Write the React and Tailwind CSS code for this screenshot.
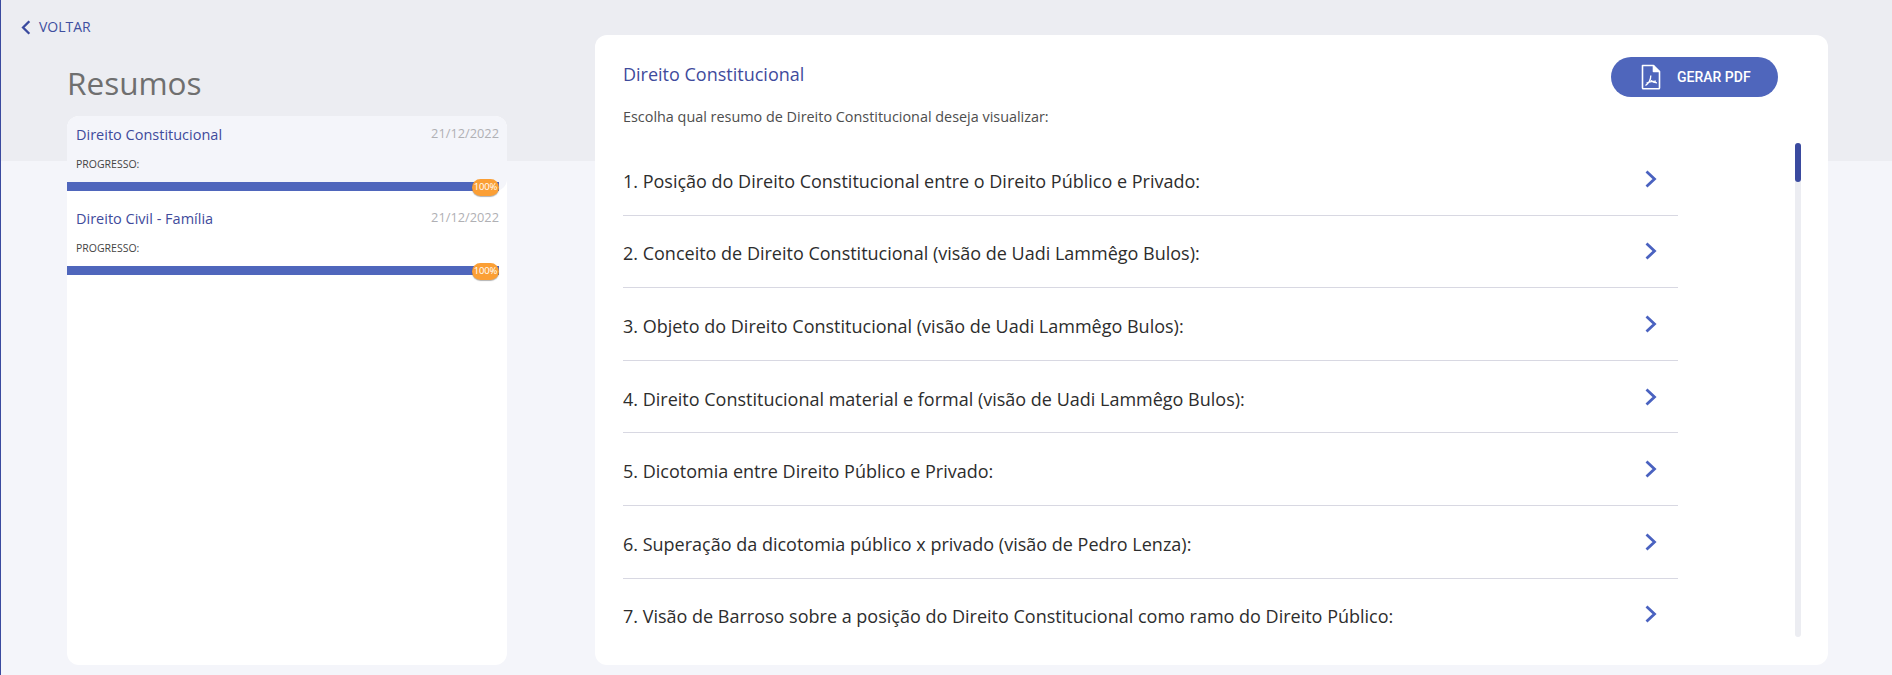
import React from 'react';

const resumos = [
  { id: 1, title: 'Direito Constitucional', date: '21/12/2022', active: true },
  { id: 2, title: 'Direito Civil - Família', date: '21/12/2022', active: false }
];

const topicos = [
  '1. Posição do Direito Constitucional entre o Direito Público e Privado:',
  '2. Conceito de Direito Constitucional (visão de Uadi Lammêgo Bulos):',
  '3. Objeto do Direito Constitucional (visão de Uadi Lammêgo Bulos):',
  '4. Direito Constitucional material e formal (visão de Uadi Lammêgo Bulos):',
  '5. Dicotomia entre Direito Público e Privado:',
  '6. Superação da dicotomia público x privado (visão de Pedro Lenza):',
  '7. Visão de Barroso sobre a posição do Direito Constitucional como ramo do Direito Público:'
];

const Chevron = ({ className, flip }) => (
  <svg className={className} width="12" height="18" viewBox="0 0 12 18" fill="none" stroke="currentColor" strokeWidth="2.8">
    <path d={flip ? 'M10 1.5 L2.5 9 L10 16.5' : 'M1.5 1.5 L9.5 9 L1.5 16.5'} />
  </svg>
);

const PdfIcon = () => (
  <svg width="20" height="26" viewBox="0 0 20 26" fill="none" stroke="white" strokeWidth="1.6" strokeLinejoin="round">
    <path d="M1.5 1.5 H12.5 L18.5 7.5 V24 Q18.5 24.8 17.7 24.8 H2.3 Q1.5 24.8 1.5 24 Z" />
    <path d="M12.5 1.5 V7.5 H18.5" fill="white" />
    <path d="M9.8 11.5 C9.8 15 8 19 4.5 21.5 M9.8 16.5 C11.5 18.2 13.5 18.8 16 18.8 M5.5 19 C8.5 17.8 11.5 17.2 15 17.2" strokeWidth="1.3" />
  </svg>
);

const App = () => {
  return (
    <div className="h-[675px] overflow-hidden border-l border-l-[#3a4a9f] bg-[linear-gradient(#ecedf2_161px,#f4f5fa_161px)] font-['Open_Sans',sans-serif]">
      <div className="flex h-[35px] items-start pl-[20px] pt-[18px]">
        <button className="flex items-center gap-[8px] text-[14px] leading-[18px] text-[#3f4f9f]">
          <Chevron flip className="h-[15px] w-[10px] text-[#3a4a9f]" />
          VOLTAR
        </button>
      </div>

      <div className="flex gap-[88px] pl-[66px]">
        {/* Lista de resumos */}
        <aside className="w-[440px]">
          <h1 className="h-[81px] pt-[26px] text-[31.5px] leading-[44px] text-[#6f6f6f]">Resumos</h1>
          <div className="h-[549px] rounded-[12px] bg-white">
            {resumos.map((r) => (
              <div key={r.id} className="h-[84px]">
                <div className={`h-[75px] ${r.active ? 'rounded-[12px] bg-[#f4f5fa]' : ''}`}>
                  <div className="flex justify-between pl-[9px] pr-[8px] pt-[9px]">
                    <span className="text-[14.5px] font-medium leading-[20px] text-[#3f4b9c]">{r.title}</span>
                    <span className="mt-[-1px] text-[12.8px] leading-[18px] text-[#b0b0b4]">{r.date}</span>
                  </div>
                  <div className="pl-[9px] pt-[12px] text-[10.5px] leading-[14px] text-[#444444]">PROGRESSO:</div>
                </div>
                <div className="relative mr-[8px] mt-[-9px] h-[9px] bg-[#4f66bc]">
                  <span className="absolute right-0 top-[-3px] flex h-[17px] w-[27px] items-center justify-center rounded-full bg-[#fb9f35] pb-[2px] text-[9.5px] leading-none tracking-[-0.2px] text-white shadow-[0_1px_1px_rgba(0,0,0,0.3)]">100%</span>
                </div>
              </div>
            ))}
          </div>
        </aside>

        {/* Painel do resumo */}
        <main className="h-[630px] w-[1233px] rounded-[12px] bg-white pl-[28px] pr-[27px]">
          <div className="flex h-[108px] items-start justify-between pr-[23px]">
            <div className="pt-[27px]">
              <h2 className="text-[18px] font-medium leading-[24px] text-[#3f4b9c]">Direito Constitucional</h2>
              <p className="pt-[21px] text-[14.4px] leading-[20px] text-[#4d4d4d]">Escolha qual resumo de Direito Constitucional deseja visualizar:</p>
            </div>
            <button className="mt-[22px] flex h-[40px] w-[167px] items-center gap-[16px] rounded-full bg-[#4f66bc] pl-[30px] font-['Roboto',sans-serif] text-[14px] font-medium text-white">
              <PdfIcon />
              GERAR PDF
            </button>
          </div>

          <div className="flex h-[494px] justify-between">
            <ul className="h-[494px] w-[1055px] overflow-hidden">
              {topicos.map((t) => (
                <li key={t} className="flex h-[72.6px] shrink-0 items-center justify-between border-b border-b-[#d8d8e2] pr-[21px]">
                  <span className="pt-[4px] text-[18px] font-medium leading-[24px] text-[#2d2d2d]">{t}</span>
                  <Chevron className="text-[#4a62c0]" />
                </li>
              ))}
            </ul>
            <div className="h-[494px] w-[6px] rounded-full bg-[#ecedf2]">
              <div className="h-[39px] rounded-full bg-[#3a4a9f]"></div>
            </div>
          </div>
        </main>
      </div>
    </div>
  );
};

export default App;
